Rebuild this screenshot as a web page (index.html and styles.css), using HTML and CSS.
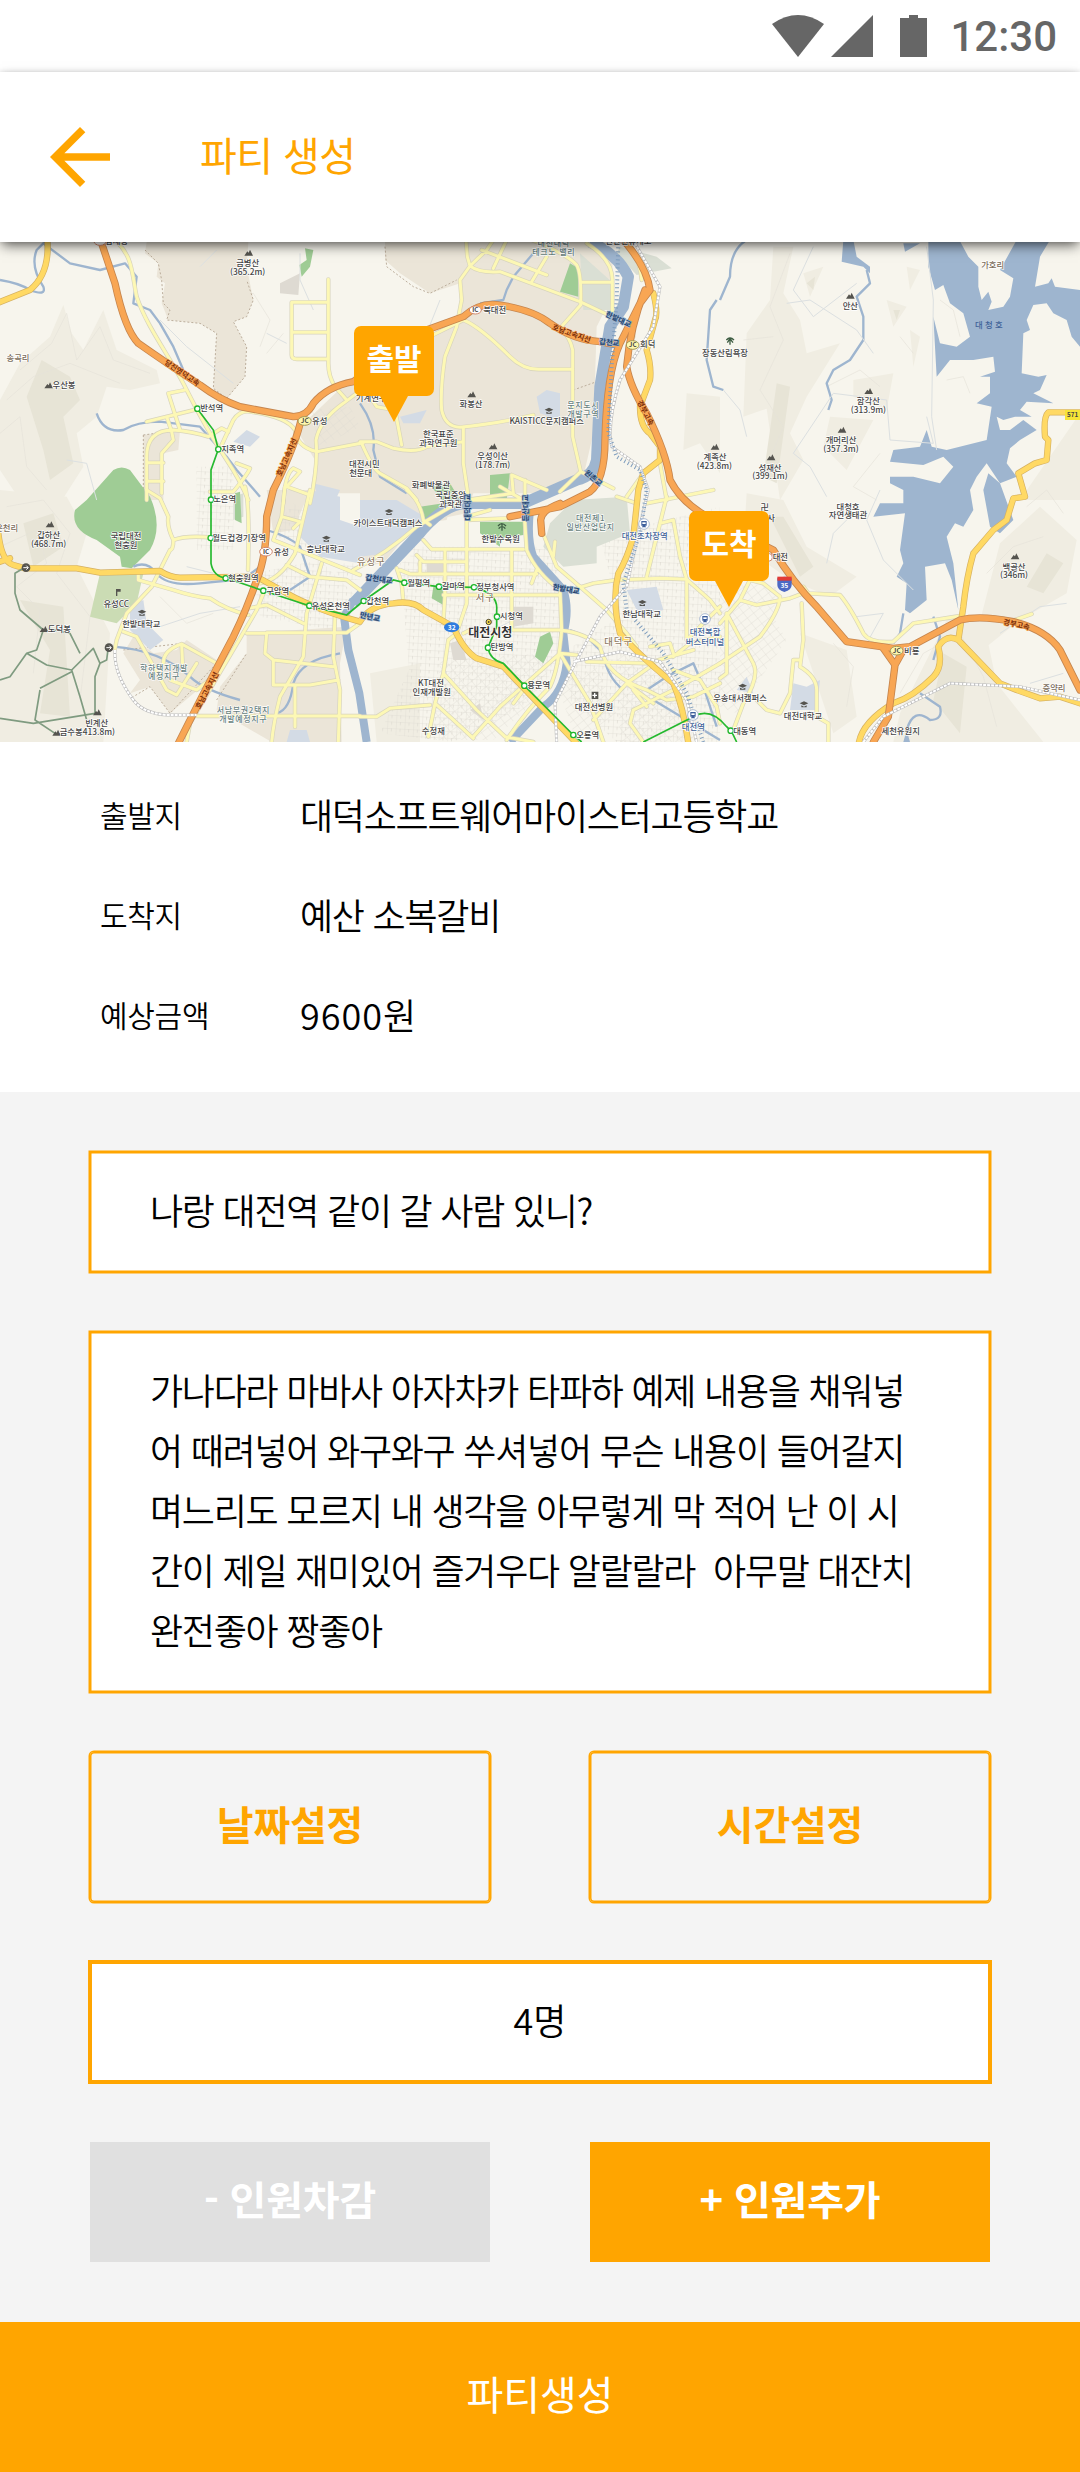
FILE: index.html
```html
<!DOCTYPE html>
<html lang="ko">
<head>
<meta charset="utf-8">
<title>파티 생성</title>
<link rel="stylesheet" href="styles.css">
</head>
<body>
<div class="screen">
  <div class="status">
    <svg class="status-icons" viewBox="772 15 155 42" width="155" height="42">
      <path d="M772 24Q798 6 824 24L798 57Z"/>
      <path d="M831 57L873 15V57Z"/>
      <path d="M909 15H918V18H927V57H900V18H909Z"/>
    </svg>
    <span class="clock">12:30</span>
  </div>
  <header class="appbar">
    <svg class="back" viewBox="0 0 24 24" width="90" height="90"><path d="M20 11H7.83l5.59-5.59L12 4l-8 8 8 8 1.41-1.41L7.83 13H20v-2z"/></svg>
    <h1 class="title">파티 생성</h1>
  </header>

  <section class="map">
    <svg class="map-art" viewBox="0 726 3240 1500" width="1080" height="500">
      <defs>
        <pattern id="streets" width="26" height="20" patternUnits="userSpaceOnUse" patternTransform="rotate(3)"><path d="M0 0H26M0 0V20M13 0V10"/></pattern>
        <pattern id="streets-tilt" width="24" height="20" patternUnits="userSpaceOnUse" patternTransform="rotate(-38)"><path d="M0 0H24M0 0V20"/></pattern>
        <g id="mount"><path d="M-13 9L-4-4L0 0L4-9L13 9Z"/></g>
        <g id="school"><path d="M-13-3L0-9L13-3L0 3ZM-8 3L0 7L8 3V9H-8Z"/></g>
        <g id="train"><circle r="16" fill="#fff" stroke="#8ba0c5" stroke-width="2"/><path d="M-8-9H8V5H-8ZM-7 10L-3 5H3L7 10" fill="#3e5f9c"/><path d="M-5-5H5V0H-5Z" fill="#fff"/></g>

        <g id="local">
          <g transform="translate(0 720)">
            <path d="M345 0C400 50 395 100 410 170C440 260 510 350 555 440C600 530 640 600 680 660Q720 720 745 780"/>
            <path d="M985 118V370Q985 410 1005 440L1040 480M985 187H875V345Q875 357 890 357H985M875 277H985"/>
            <path d="M555 450L505 460L540 570M440 545L590 508M500 530L515 575L520 600L485 640V760M440 780V650Q440 570 520 570Q580 575 625 590L665 565L685 575M440 668H490M440 724H490"/>
            <path d="M665 615L700 540Q720 510 750 515Q860 530 885 570Q890 620 950 635L1090 608M1090 445L1030 490Q960 540 948 600Q955 680 930 790"/>
            <path d="M850 790Q855 700 880 685L900 695L860 740L930 765M630 755H700Q745 700 750 685L710 670"/>
          </g>
          <g transform="translate(1080 720)">
            <path d="M318 0L322 50L330 78L300 120L305 180L290 260L255 350Q240 450 245 510Q255 560 300 562Q420 550 520 525M330 78L380 30L400 0M330 78Q360 100 420 95L660 185L745 225M365 30L560 105M440 0L400 85M560 50L515 125M490 -10Q620 40 650 75Q665 100 662 195L600 265Q630 290 638 330V590L662 695L600 755M680 10Q760 60 757 125V215M662 127H757"/>
            <path d="M215 287L310 240Q360 260 450 350Q490 390 540 388H638M0 605H50L100 625Q170 640 200 620L310 605M310 562V670L325 770M30 470L50 500L105 510L125 615M5 610Q40 690 60 700L140 745L170 780M455 705L460 760L320 780M455 705L560 750M495 720V780M662 695L760 745M800 770L850 700M900 670L920 780"/>
            <path d="M790 0Q840 50 845 120M820 290L815 240"/>
          </g>
          <g transform="translate(0 1470)">
            <path d="M440 0L480 25L505 80Q500 110 520 150Q520 180 510 180L490 220L455 290L380 370L350 450L345 475M520 150Q560 135 640 143M735 -10Q750 40 744 240M415 250V270L520 300Q580 320 630 325Q680 360 745 375M370 425L410 440L450 510L500 600L530 615L590 520"/>
            <path d="M490 520Q490 480 545 462L650 520M545 462L548 530M510 570L590 600L640 560M855 -10L845 80L820 150L1080 255M930 0L885 190Q840 270 780 280M845 80L900 95L880 115M860 225L930 260L1040 270L1080 300M965 220L920 370L910 500L840 620Q820 700 815 756M790 310L770 360L570 700L560 756M745 355L800 345L910 400M740 430H800L795 490L820 510V585H930L1015 570M800 428H1040L1080 400M820 510L1000 530M1005 380L1000 500L1020 600L1015 756M590 678H1080M885 590V710"/>
          </g>
          <g transform="translate(1080 1470)">
            <path d="M-20 240Q80 190 170 110L290 40M140 0Q180 30 190 90L210 105M190 150L215 178H490M170 195L190 215H320M120 240L150 252H530M110 235L125 280L130 335M255 180V310L250 400M180 215V250M320 90V340L290 430M390 60L320 80M320 90L440 85M250 315H600M455 180V420M320 30H490M420 -10L490 30L500 180Q530 250 600 300L605 420Q595 540 570 590Q500 660 440 750M530 240L515 280M460 420H600Q680 430 720 470Q740 560 860 600L920 630L1000 620L1080 580M290 430L265 450L250 550L225 640L205 740M250 550L350 660L435 740L520 756M310 430L330 420M225 640Q270 680 340 745M0 680H50L90 655L210 645M340 740L420 650L600 490L650 495M460 640L490 600M545 120L590 230Q660 290 740 360L800 430M585 155L580 200M650 295L700 280L770 270L900 265L980 268M860 260L920 20M980 268L960 200L940 90L900 100M980 268V450L1080 350M830 470L800 430M980 268L1050 330L1080 370M600 490L690 640L730 756M680 515L860 520L1000 480M700 690L800 580L870 530M800 580L880 640M820 660L960 590L1080 520M820 660L810 700L850 756M860 650L820 600M940 540L1020 570L1070 650L1080 700M870 470L930 460L940 490M940 500L990 460L1080 440M770 20L830 40M860 40L1060 0"/>
          </g>
          <g transform="translate(2160 1470)">
            <path d="M0 400L60 330L90 270M0 520L120 440Q180 360 180 320L130 280L90 270M60 330L110 345L210 325L250 310M250 290L265 310L360 315Q390 350 430 430Q450 460 520 455L580 400L720 378M850 385L870 395L935 372M245 340L250 450L240 530Q290 560 290 600V680L325 700V756M240 510L220 510L210 610L180 670L140 660L110 630M20 370L100 520Q120 560 70 640L40 720M0 565L20 550V370"/>
          </g>
        </g>

        <g id="main">
          <path transform="translate(0 720)" d="M142 0Q150 100 90 150L-10 190"/>
          <path transform="translate(0 1470)" d="M-5 130Q5 215 40 225L75 235H230L300 248L480 243Q510 262 540 263L770 260L860 310Q950 360 1080 395Q1110 345 1180 340Q1240 330 1270 360L1360 410Q1390 480 1430 505L1510 530L1730 760"/>
          <path d="M0 215L30 205" transform="translate(0 1470)"/>
          <path transform="translate(1080 720)" d="M880 160Q895 220 885 240L860 330Q875 380 870 420L840 500Q840 560 870 580L900 620V660L850 700L835 750L820 890Q800 960 775 1000Q755 1080 780 1180Q830 1240 940 1330Q970 1400 985 1510"/>
          <path transform="translate(2160 720)" d="M1080 517H985Q970 530 975 590L985 600L980 660L945 670L895 700L915 770L880 775L860 840L820 870L760 940Q740 1010 730 1100L715 1200M1080 1390L1020 1370L960 1375L890 1350L840 1330L715 1200Q680 1180 655 1220Q670 1280 640 1310Q580 1370 520 1390Q420 1450 415 1520"/>
        </g>

        <g id="highway">
          <path transform="translate(0 720)" d="M300 -5L345 130Q375 270 415 310Q500 370 600 435Q660 480 720 500L880 530Q920 530 940 490Q980 440 1060 425L1280 270L1390 230Q1440 185 1500 195Q1600 210 1650 250Q1720 300 1800 305L1850 315"/>
          <path transform="translate(0 720)" d="M905 530Q890 610 820 750L800 830Q800 950 770 1020Q740 1110 700 1190Q620 1340 535 1510"/>
          <path transform="translate(1080 720)" d="M790 0Q860 80 870 150L840 190L780 310Q740 400 735 600Q735 720 690 755L600 800L450 830M855 150Q810 260 800 380Q810 440 860 520Q920 640 930 720Q970 800 1080 850L1240 930Q1300 1030 1370 1100Q1430 1170 1460 1205L1600 1225L1650 1220L1800 1140Q1860 1125 1960 1145Q2060 1170 2100 1230L2160 1350M545 880L542 840Q545 810 600 790"/>
          <path transform="translate(2160 1470)" d="M490 475L525 525L550 480M525 525L505 680L460 756"/>
        </g>
      </defs>

      <rect y="726" width="3240" height="1500" fill="#f7f5ed"/>

      <!-- hills and contour shading -->
      <g class="hill">
        <path d="M190 915L215 1000L250 1050L310 930L350 1050L470 1110L480 1150L390 1170L320 1160L290 1250L230 1300L250 1400L180 1510L60 1500L0 1410V1200L60 1090L150 1010Z"/>
        <path d="M0 1470L200 1490L260 1600L230 1700L330 1900L310 2226H0Z"/>
        <path d="M2320 740L2380 740L2350 880L2400 960L2420 1060L2520 1030L2420 1190L2370 1300L2410 1380L2340 1500L2300 1226L2230 1250L2240 1000L2310 900ZM2410 820L2470 800L2430 890ZM2660 900L2720 920L2680 980ZM2720 800L2760 810L2730 870ZM2560 1140L2680 1120L2660 1230L2560 1190ZM2490 1250L2620 1260L2540 1410L2470 1340ZM2730 990L2760 1010L2740 1100Z"/>
        <path d="M2240 1480L2350 1500L2420 1640L2570 1730L2490 1790L2370 1740L2230 1640ZM2700 2140L2840 1860L2950 1860L2990 2050L3130 2226H2680ZM2910 1980L3000 1630L3120 1520L3230 1620L3200 1780L3060 1860ZM3060 1500L3240 1240V1500ZM2400 1900L2540 1950L2570 2150L2500 2200Z"/>
        <path d="M2060 1180L2160 1190V1420L2100 1330L2050 1350ZM1110 2020L1260 1990V2226H1130Z"/>
      </g>
      <g class="hill-high">
        <path d="M125 1080L210 1130L240 1200L190 1250L220 1390L150 1440L130 1350L80 1190ZM70 1570L160 1540L190 1640L100 1700ZM60 1800L190 1820L210 2150L120 2140L150 1950Z"/>
        <path d="M2330 1150L2370 1160L2330 1450L2290 1430ZM2310 1550L2350 1550L2440 1700L2400 1730ZM3140 1660L3190 1690L3130 1780L3080 1760ZM2800 2100L2830 1960L2900 2000L2880 2200ZM2420 850L2445 830L2440 870ZM2680 930L2700 930L2690 960Z"/>
      </g>
      <g class="contours">
        <path d="M60 1110L155 1030L200 940L230 1080L300 980L340 1080L450 1120M20 1200L100 1130L210 1090L310 1130L360 1150M0 1300L60 1250L80 1400L140 1470M20 1520L130 1500L210 1600L170 1720L270 1850L240 2100M0 1640L110 1590L140 1690L50 1760L120 1830L100 2020M2370 760L2310 920L2350 1020L2280 1170L2350 1280L2290 1420M2230 1020L2320 1010M2480 1160L2580 1110L2640 1160M2700 1010L2740 1060M2640 1360L2560 1460L2630 1500M2820 900L2860 930L2880 1010M2840 1140L2890 1130L2910 1180M3080 1520L3140 1470L3190 1540M2960 1720L3040 1640L3130 1610M2700 2080L2770 1960L2880 1900L2950 2030L2990 2180M2500 1930L2560 2000L2540 2120M480 1790L560 1870L640 1840M700 900L760 880L810 960L780 1040M800 1060L850 1000"/>
      </g>

      <!-- urban areas -->
      <g fill="#ebe5d8">
        <path d="M440 726H745L740 800L760 900L740 950L700 965L740 1040L735 1130L680 1195L640 1165L650 1000L600 970L505 960L485 910L495 850L470 830L475 790L435 760Z"/>
        <path d="M1155 726H1750L1840 760L1830 900L1790 980L1780 1300L1750 1430L1650 1480L1420 1480L1400 1540L1250 1570L1150 1690L1080 1700V1480L930 1480L945 1380L890 1290L1080 1110L1380 960V850L1290 880L1200 820L1155 780Z"/>
        <path d="M430 1305L540 1290L535 1350L490 1360V1500H430Z"/>
        <path d="M800 1470H930L880 1590L820 1600ZM740 1900L1040 1880L1020 1990L1025 2226H815L650 2130L660 2060L740 1960ZM1240 1480L1360 1480L1340 1560L1190 1580Z"/>
        <path d="M370 1960L400 1910L460 1960L530 1950L560 1920L650 1980L640 2030L510 2140L450 2060L390 2080L420 2040Z"/>
      </g>
      <g class="boundary"><path d="M435 750L475 790L485 840L490 910L510 930L500 960L600 970L650 1000L640 1165L680 1195L735 1130L740 1040L700 965L740 950L760 900L740 840M1155 740L1160 800L1240 860L1290 880L1370 840M430 1305L540 1290M430 1305V1500M1720 1170L1790 1145V1350M650 2100L740 1960M370 1950L550 1930L650 1990L510 2140L450 2060L400 2090"/></g>
      <g fill="url(#streets)">
        <path d="M1230 1640L1670 1640L1690 1980L1570 2120L1360 2226L1140 2200L1240 1980ZM590 1400H700V1650H590ZM760 1720L960 1680L1070 1790L1000 1890L780 1850ZM1200 1690L1320 1640V1880L1230 2040Z"/>
        <path d="M1800 1610L2160 1520V2226H1850L1710 2100L1700 1950L1860 1850ZM880 1510L930 1540L920 1650L810 1600ZM1010 1690H1080V1740H1010Z"/>
      </g>
      <g fill="url(#streets-tilt)">
        <path d="M1320 1980L1640 1960L1640 2070L1480 2220H1300ZM2160 1740L2330 1760L2320 1850L2360 1920L2210 2140L2160 2120ZM930 1230L1050 1220L1080 1280L960 1340ZM1850 1940L2000 2000L2100 2226H1860ZM1670 2050L1790 2000L1850 2140L1730 2226Z"/>
      </g>
      <g fill="#dadfd4">
        <path d="M1860 740L1970 770L2015 805L1910 825L1850 760ZM1740 760L1840 850L1830 930L1750 930ZM1650 1570L1720 1500L1880 1490L1890 1600L1790 1640L1790 1690L1690 1700L1630 1640ZM700 1490L730 1480V1550L700 1560Z"/>
      </g>
      <g fill="#d3dbe5">
        <path d="M1080 1500L1190 1500L1290 1560L1160 1660L1080 1670ZM930 1470L1020 1490V1560L1080 1580V1690L960 1670L900 1610ZM700 1325L740 1290L780 1310L750 1340ZM940 1450L1020 1470L980 1560ZM390 1820L430 1800L440 1870L490 1920L450 1950L390 1890ZM1610 1190L1640 1170L1680 1180V1260L1620 1240ZM1200 1250L1280 1230L1260 1270L1210 1270ZM1880 1770L1970 1760L1990 1830L1920 1850ZM2370 2130L2380 2050L2420 2060L2460 2040L2450 2130ZM2210 2070L2240 2030L2260 2080ZM860 2226L870 2190L920 2190L930 2226ZM1640 1180H1680V1250H1640Z"/>
      </g>
      <g fill="#9fcc95">
        <path d="M260 1500L340 1410Q365 1395 390 1410L450 1490Q490 1580 450 1650L395 1705L365 1700L360 1670L290 1620Q210 1590 225 1530Z"/>
        <path d="M915 745L940 750L930 800L905 830L898 795L920 780ZM1710 790L1735 805V890L1680 875ZM1470 1425L1530 1420L1520 1500H1470ZM1440 1565H1570V1605L1500 1615V1640L1440 1600ZM1620 1910L1650 1895L1660 1930L1630 1990L1605 1970ZM1300 1760H1330V1815L1295 1795ZM705 1480L720 1475L725 1570L705 1560ZM1295 1460L1350 1450L1380 1500L1340 1520ZM1260 1520L1330 1510L1320 1560L1270 1570Z"/>
        <path fill="#cbdcb4" d="M300 1720L430 1720L410 1810L350 1870L270 1850Z"/>
      </g>
      <g fill="#dedad2"><path d="M840 850L900 820L895 885L840 880ZM1280 1690H1330V1720H1280ZM1540 1820H1600V1870L1540 1880ZM1350 1930L1380 1920L1400 1980L1360 1980ZM1410 2130L1440 2110L1450 2160Z"/></g>

      <!-- lake and rivers -->
      <g fill="#9eb5cf">
        <path d="M2785 720H2878L2905 770L2935 800V860L2945 900L2965 875L2975 905L2965 930L3010 920L3030 890L3040 835L3000 810L3050 720H3150L3120 770L3105 860L3145 850L3155 835L3165 860L3240 870V1040L3215 1010L3200 960L3160 940L3140 910L3100 915L3080 960L3090 990L3070 1000L3065 1120L3115 1130L3140 1125L3120 1170L3100 1180L3160 1210L3080 1205L3060 1230L3095 1250L3045 1250L3010 1260L2990 1250L3000 1290L3030 1290L3070 1260L3110 1290L3060 1320L3030 1345L3020 1390L3050 1430L3000 1450L2960 1390L2930 1430L2910 1470L2920 1530L2890 1580L2865 1570L2840 1610L2860 1690L2875 1830L2855 1740L2835 1690L2775 1700L2780 1800L2730 1840L2715 1830L2720 1750L2690 1730L2710 1690L2700 1650L2715 1540L2620 1550L2640 1510L2710 1510V1470L2670 1450L2670 1430L2740 1430L2820 1450L2860 1400L2830 1370L2770 1395L2670 1385L2680 1350L2760 1340L2780 1290L2795 1340L2840 1350L2960 1320L2975 1220L2930 1210L2970 1180V1130L2940 1130L2985 1115L2980 1070L2920 1080L2850 1080L2810 1130L2800 950L2820 1030L2870 1040L2910 1010L2890 940L2850 910L2830 855L2805 870L2785 800Z"/>
        <path d="M2530 720H2560L2570 770L2610 800L2610 820L2590 800L2525 785ZM2710 730H2760L2715 755ZM2950 1470L2965 1420L3000 1450L3040 1560L3000 1600L2970 1580ZM2710 2226L2720 2190L2730 2226Z"/>
      </g>
      <g class="river">
        <path class="wide" d="M1770 726Q1850 760 1885 830L1870 920L1830 980L1800 1160L1790 1380Q1780 1430 1730 1440L1570 1510H1400Q1330 1510 1250 1610L1060 1810"/>
        <path class="mid" d="M1590 1530Q1580 1620 1600 1670L1690 1770Q1710 1830 1690 1900L1700 1990Q1690 2080 1630 2120L1530 2226"/>
        <path class="mid" d="M1060 1800L1032 1850L1045 1950L1078 2080L1100 2226"/>
        <path class="narrow" d="M1710 1890L1760 1910L1810 1960Q1820 2030 1870 2070M1020 1960Q900 1980 880 2050Q870 2130 830 2140M340 1940Q480 1950 570 2030Q610 2070 720 2100M1600 760L1540 830L1520 870L1510 900L1440 910M1080 1210Q1130 1280 1120 1350L1140 1430L1220 1480"/>
        <path class="narrow" d="M550 1110L520 1040L480 970L450 930L400 910L410 830L375 790L300 810L210 790L130 730M0 840Q60 850 90 870Q140 890 130 860Q90 800 110 750L140 720M290 1240Q310 1300 370 1290Q410 1265 480 1265L600 1280L680 1370L710 1410L780 1490M400 1700Q440 1680 470 1720Q500 1760 600 1750L700 1740L740 1730L780 1700M800 1590Q870 1610 900 1640L930 1730L870 1770M1960 2100L2160 2220M2240 720Q2190 750 2190 830L2160 900M2600 810L2610 850L2570 890L2590 950L2590 1020L2550 1080L2500 1110L2480 1150L2495 1200L2485 1230M2710 1840L2700 1900L2680 1930M2800 1850L2820 1910L2800 1980M2760 2080L2820 2120Q2830 2160 2790 2160Q2740 2120 2720 2190M2150 900L2130 930L2120 1080L2140 1160L2170 1170M1940 2070L2000 2030L2080 1990L2110 2060L2150 2180"/>
      </g>

      <!-- minor lanes -->
      <g class="lane">
        <path d="M2440 740L2380 870L2440 950L2570 850M2360 910L2430 900L2570 990L2620 1060M2780 740L2800 900L2795 1250L2810 1350M2780 1250L2800 1330L2670 1320L2660 1200L2500 1180M2500 1180L2380 1360L2430 1400L2480 1490M2640 1470L2600 1560L2650 1680L2740 1770M2560 1540L2500 1600L2480 1690M2600 1930L2650 1840L2570 1850M2170 1170L2220 1230L2240 1310M200 1380L260 1390L290 1500M860 1030L800 1000M650 750L600 800M940 930L900 840V760M700 1150L560 1040L480 960M3000 1900L3120 1820L3200 1810M3090 2050L3190 2020M1460 1900L1560 1850M640 1720L560 1700M480 1880L600 1840L720 1820M1320 900L1240 1100"/>
      </g>

      <use href="#local" class="local-casing"/><use href="#local" class="local-fill"/>
      <use href="#main" class="main-casing"/><use href="#main" class="main-fill"/>
      <use href="#highway" class="highway-casing"/><use href="#highway" class="highway-fill"/>

      <g class="trail"><path d="M70 1705L45 1720V1780L60 1830L130 1890L110 1950L80 1960L30 2030L0 2040M80 1960L140 1995L215 2010L280 1945L300 1990L285 2030V2140L100 2170L0 2155M215 2010L240 2090L260 2160M120 2070L105 2160L165 2200M120 2065L215 2015M145 1885L210 1900L240 1960M325 1940L320 1980L300 1990"/></g>
      <g id="rails">
        <path class="rail-casing" d="M1945 1470L1915 1600L1880 1760L1800 1850L1720 2000L1665 2110L1670 2226M1720 1985L1860 1955L1980 1985L2060 2100L2090 2226M1905 730L1980 860L1960 980L1860 1140Q1820 1270 1835 1340L1920 1400L1945 1470M345 1950Q340 2020 400 2100Q430 2140 500 2145H590M2590 2226L2650 2150L2850 2050L3060 2060L3240 2100"/>
        <path class="rail" d="M1945 1470L1915 1600L1880 1760L1800 1850L1720 2000L1665 2110L1670 2226M1720 1985L1860 1955L1980 1985L2060 2100L2090 2226M1905 730L1980 860L1960 980L1860 1140Q1820 1270 1835 1340L1920 1400L1945 1470M345 1950Q340 2020 400 2100Q430 2140 500 2145H590M2590 2226L2650 2150L2850 2050L3060 2060L3240 2100"/>
        <path class="rail-blue" d="M1855 730L1850 900L1835 1100L1825 1300L1850 1370L1920 1410L1940 1470L1920 1600L1870 1750L1880 1830L1990 1960L2060 2080L2110 2226"/>
      </g>
      <path class="metro" d="M592 1226L640 1290L655 1348L633 1410V1690Q640 1730 680 1735L790 1772L930 1818L1040 1845L1090 1803L1180 1740L1213 1748L1317 1760L1422 1762Q1495 1780 1490 1830V1880L1464 1943Q1470 1980 1510 1990L1573 2057L1720 2205L1745 2226M1930 2226L2080 2150Q2130 2120 2180 2180L2195 2195L2210 2226"/>
      <g class="station">
        <circle cx="592" cy="1226" r="8"/><circle cx="655" cy="1348" r="8"/><circle cx="633" cy="1499" r="8"/><circle cx="632" cy="1614" r="8"/><circle cx="677" cy="1735" r="8"/><circle cx="790" cy="1772" r="8"/><circle cx="928" cy="1817" r="8"/><circle cx="1091" cy="1803" r="8"/><circle cx="1213" cy="1748" r="8"/><circle cx="1317" cy="1760" r="8"/><circle cx="1422" cy="1762" r="8"/><circle cx="1491" cy="1850" r="8"/><circle cx="1464" cy="1943" r="8"/><circle cx="1573" cy="2057" r="8"/><circle cx="1720" cy="2205" r="8"/><circle cx="2192" cy="2192" r="8"/>
      </g>

      <!-- symbols -->
      <g fill="#55544f">
        <use href="#mount" x="746" y="758"/><use href="#mount" x="146" y="1156"/><use href="#mount" x="150" y="1573"/><use href="#mount" x="1415" y="1183"/><use href="#mount" x="1479" y="1339"/><use href="#mount" x="2145" y="1340"/><use href="#mount" x="2551" y="887"/><use href="#mount" x="2606" y="1173"/><use href="#mount" x="2526" y="1289"/><use href="#mount" x="2313" y="1372"/><use href="#mount" x="3045" y="1669"/><use href="#mount" x="132" y="1887"/><use href="#mount" x="292" y="2137"/><use href="#mount" x="170" y="2198"/>
        <use href="#school" x="979" y="1616"/><use href="#school" x="426" y="1838"/><use href="#school" x="1167" y="1536"/><use href="#school" x="1647" y="1232"/><use href="#school" x="1927" y="1809"/><use href="#school" x="2228" y="2060"/><use href="#school" x="2412" y="2113"/>
        <path d="M348 1767H362V1775H352V1788H348ZM1775 2075H1795V2097H1775Z"/>
        <path d="M1784 2079V2093M1777 2086H1791" stroke="#fff" stroke-width="4"/>
        <path d="M1494 1578Q1505 1564 1518 1578M1496 1586Q1506 1572 1516 1586M1506 1570V1592M2179 1020Q2190 1008 2202 1020M2182 1028L2190 1016L2199 1028M2190 1012V1034" fill="none" stroke="#3d5c42" stroke-width="4"/>
        <circle cx="78" cy="1703" r="13"/><circle cx="327" cy="1943" r="13"/>
        <path d="M70 1703H84M79 1697L85 1703L79 1709M319 1943H333M328 1937L334 1943L328 1949" fill="none" stroke="#fff" stroke-width="3"/>
      </g>
      <use href="#train" x="1932" y="1572"/><use href="#train" x="2115" y="1857"/><use href="#train" x="2079" y="2145"/>
      <circle cx="1466" cy="1866" r="8" fill="#ffe34b" stroke="#4c4530" stroke-width="3"/><circle cx="1466" cy="1866" r="3" fill="#4c4530"/>
      <ellipse cx="1355" cy="1882" rx="23" ry="15" fill="#2f7de0"/>
      <path d="M2332 1735Q2353 1726 2375 1735V1755Q2375 1770 2353 1776Q2332 1770 2332 1755Z" fill="#4d69c4"/><path d="M2332 1730H2375V1742H2332Z" fill="#e23b35"/>
      <path d="M3195 1230H3240V1260H3195Z" fill="#f7e437"/>
      <g class="junction">
        <ellipse cx="914" cy="1263" rx="20" ry="13"/><ellipse cx="1898" cy="1035" rx="19" ry="13"/><ellipse cx="2690" cy="1952" rx="19" ry="13"/>
        <g class="exit"><ellipse cx="1426" cy="930" rx="18" ry="12"/><ellipse cx="798" cy="1655" rx="19" ry="13"/><ellipse cx="300" cy="724" rx="18" ry="12"/><ellipse cx="2308" cy="1672" rx="9" ry="11"/></g>
      </g>

      <!-- place names -->
      <g class="label">
        <text x="743" y="798">금병산</text><text x="743" y="825">(365.2m)</text>
        <text x="192" y="1165">우산봉</text><text x="635" y="1234">반석역</text><text x="698" y="1356">지족역</text><text x="674" y="1507">노은역</text>
        <text x="959" y="1272">유성</text><text x="350" y="733">남세종</text>
        <text x="146" y="1614">갑하산</text><text x="146" y="1640">(468.7m)</text>
        <text x="378" y="1617">국립대전</text><text x="378" y="1644">현충원</text>
        <text x="717" y="1622">월드컵경기장역</text><text x="844" y="1664">유성</text><text x="977" y="1657">충남대학교</text>
        <text x="730" y="1743">현충원역</text><text x="833" y="1781">구암역</text><text x="992" y="1826">유성온천역</text>
        <text x="349" y="1821">유성CC</text><text x="424" y="1880">한밭대학교</text><text x="178" y="1896">도덕봉</text>
        <text x="290" y="2178">빈계산</text><text x="262" y="2205">금수봉413.8m)</text>
        <text x="1093" y="1400">대전시민</text><text x="1082" y="1427">천문대</text><text x="1125" y="1202">기계연구원</text>
        <text x="1484" y="938">북대전</text><text x="1413" y="1222">화봉산</text><text x="1640" y="1273">KAISTICC문지캠퍼스</text>
        <text x="1315" y="1312">한국표준</text><text x="1315" y="1339">과학연구원</text>
        <text x="1478" y="1377">우성이산</text><text x="1478" y="1404">(178.7m)</text><text x="1293" y="1464">화폐박물관</text>
        <text x="1352" y="1495">국립중앙</text><text x="1352" y="1522">과학관</text><text x="1943" y="1042">회덕</text><text x="1885" y="731">신탄진휴게소</text>
        <text x="1164" y="1577">카이스트대덕캠퍼스</text><text x="1502" y="1625">한밭수목원</text>
        <text x="1256" y="1757">월평역</text><text x="1360" y="1768">갈마역</text><text x="1486" y="1770">정부청사역</text><text x="1133" y="1812">갑천역</text>
        <text x="1534" y="1857">시청역</text><text x="1506" y="1951">탄방역</text><text x="1616" y="2065">용문역</text><text x="1763" y="2213">오룡역</text>
        <text x="1293" y="2058">KT대전</text><text x="1295" y="2085">인재개발원</text><text x="1300" y="2201">수정재</text>
        <text x="1782" y="2129">대전선병원</text><text x="1925" y="1851">한남대학교</text>
        <text x="2551" y="927">안산</text><text x="2175" y="1067">장동산림욕장</text>
        <text x="2605" y="1213">함각산</text><text x="2605" y="1240">(313.9m)</text><text x="2523" y="1329">개머리산</text><text x="2523" y="1355">(357.3m)</text>
        <text x="2310" y="1412">성재산</text><text x="2310" y="1437">(399.1m)</text><text x="2145" y="1380">계족산</text><text x="2143" y="1408">(423.8m)</text>
        <text x="2544" y="1529">대청호</text><text x="2544" y="1555">자연생태관</text><text x="2294" y="1530">卍</text><text x="2290" y="1562">비래사</text>
        <text x="2341" y="1680">대전</text><text x="3042" y="1709">백골산</text><text x="3042" y="1735">(346m)</text><text x="2735" y="1961">비룡</text>
        <text x="2220" y="2103">우송대서캠퍼스</text><text x="2409" y="2156">대전대학교</text><text x="2234" y="2201">대동역</text><text x="2702" y="2203">세천유원지</text>
        <g class="brown"><text x="54" y="1082">송곡리</text><text x="20" y="1592">온천리</text><text x="2978" y="804">가호리</text><text x="3162" y="2072">증약리</text></g>
        <g class="district"><text x="1114" y="1696">유성구</text><text x="1456" y="1804">서구</text><text x="1856" y="1936">대덕구</text></g>
        <g class="zone"><text x="1661" y="738">대전대덕</text><text x="1661" y="764">테크노 밸리</text><text x="1750" y="1224">문지도시</text><text x="1750" y="1250">개발구역</text><text x="1772" y="1562">대전제1</text><text x="1772" y="1589">일반산업단지</text><text x="492" y="2012">학하택지개발</text><text x="492" y="2038">예정지구</text><text x="730" y="2138">서남부권2택지</text><text x="730" y="2165">개발예정지구</text></g>
        <g class="blue"><text x="1934" y="1617">대전조차장역</text><text x="2115" y="1904">대전복합</text><text x="2115" y="1934">버스터미널</text><text x="2080" y="2191">대전역</text><text class="lake" x="2970" y="984">대청호</text></g>
        <g class="bridge"><text transform="translate(1852 965) rotate(25)">한밭대교</text><text transform="translate(1827 1035) rotate(5)">갑천교</text><text transform="translate(1775 1440) rotate(40)">원촌교</text><text transform="translate(1410 1522) rotate(-90)">대덕대교</text><text transform="translate(1583 1524) rotate(-90)">둔산대교</text><text transform="translate(1136 1745) rotate(7)">갑천대교</text><text transform="translate(1697 1775) rotate(10)">한밭대교</text><text transform="translate(1108 1858) rotate(12)">만년교</text></g>
        <g class="road-name"><text transform="translate(542 1125) rotate(34)">당진영덕고속</text><text transform="translate(868 1375) rotate(-66)">호남고속지선</text><text transform="translate(628 2075) rotate(-62)">호남고속지선</text><text transform="translate(1712 1008) rotate(20)">호남고속지선</text><text transform="translate(1930 1242) rotate(62)">경부고속</text><text transform="translate(3048 1881) rotate(12)">경부고속</text></g>
        <g class="mark"><text x="914" y="1270">JC</text><text x="1898" y="1042">JC</text><text x="2690" y="1959">JC</text><text x="1426" y="937">IC</text><text x="798" y="1662">IC</text><text x="3218" y="1251">571</text></g>
        <g class="shield"><text x="1355" y="1889">32</text><text x="2353" y="1763">35</text></g>
        <text class="city" x="1471" y="1912">대전시청</text>
      </g>
    </svg>
    <div class="pin pin-start">출발</div>
    <div class="pin pin-end">도착</div>
  </section>

  <dl class="trip">
    <dt>출발지</dt><dd>대덕소프트웨어마이스터고등학교</dd>
    <dt>도착지</dt><dd>예산 소복갈비</dd>
    <dt>예상금액</dt><dd><span class="amount">9600</span>원</dd>
  </dl>

  <main class="form">
    <div class="field field-title">나랑 대전역 같이 갈 사람 있니?</div>
    <div class="field field-body">가나다라 마바사 아자차카 타파하 예제 내용을 채워넣
어 때려넣어 와구와구 쑤셔넣어 무슨 내용이 들어갈지
며느리도 모르지 내 생각을 아무렇게 막 적어 난 이 시
간이 제일 재미있어 즐거우다 알랄랄라  아무말 대잔치
완전좋아 짱좋아</div>
    <div class="pair">
      <div class="button outlined">날짜설정</div>
      <div class="button outlined">시간설정</div>
    </div>
    <div class="field field-count">4명</div>
    <div class="pair">
      <div class="button disabled">- 인원차감</div>
      <div class="button filled">+ 인원추가</div>
    </div>
  </main>
  <footer class="submit">파티생성</footer>
</div>
</body>
</html>
```
FILE: styles.css
```css
* { box-sizing: border-box; margin: 0; }
body { background: #fff; }

.screen {
  width: 1080px;
  height: 2472px;
  display: flex;
  flex-direction: column;
  overflow: hidden;
  font-family: "Noto Sans CJK KR", sans-serif;
  color: #000;
}

.status {
  height: 72px;
  display: flex;
  justify-content: flex-end;
  align-items: flex-start;
  gap: 23px;
  padding: 15px 23px 0 0;
}
.status-icons { fill: #666; }
.clock {
  padding-top: 1px;
  font: 500 42px/42px Roboto, sans-serif;
  color: #666;
}

.appbar {
  position: relative;
  z-index: 2;
  height: 170px;
  display: flex;
  align-items: center;
  gap: 75px;
  padding-left: 35px;
  background: #fff;
  box-shadow: 0 5px 12px -2px rgba(0, 0, 0, .65), 0 0 5px rgba(0, 0, 0, .1);
}
.back { fill: #ffa500; }
.title {
  padding-bottom: 7px;
  font-size: 40px;
  font-weight: 400;
  line-height: 60px;
  letter-spacing: -.6px;
  color: #ffa500;
}

.map { position: relative; height: 500px; overflow: hidden; }
.map-art { display: block; }
.pin {
  position: absolute;
  width: 80px;
  height: 70px;
  border-radius: 7px;
  background: #ffa500;
  color: #fff;
  font-size: 30px;
  font-weight: 700;
  line-height: 63px;
  text-align: center;
}
.pin::after {
  content: "";
  position: absolute;
  left: 26px;
  top: 70px;
  border: 14px solid transparent;
  border-top: 26px solid #ffa500;
  border-bottom: 0;
}
.pin-start { left: 354px; top: 84px; }
.pin-end { left: 689px; top: 269px; }

.hill { fill: #f0ede2; }
.hill-high { fill: #e7e4d6; }
.contours { fill: none; stroke: #e5e3d9; stroke-width: 2; stroke-linejoin: round; }
.boundary { fill: none; stroke: #bcae9c; stroke-width: 3; stroke-dasharray: 6 6; }
pattern path { fill: none; stroke: #dedbd3; stroke-width: 2; }
.river { fill: none; stroke: #9eb5cf; stroke-linejoin: round; }
.wide { stroke-width: 34; }
.mid { stroke-width: 24; }
.narrow { stroke-width: 7; }
.lane { fill: none; stroke: #dce0e1; stroke-width: 3; stroke-linejoin: round; }
.local-casing, .local-fill, .main-casing, .main-fill, .highway-casing, .highway-fill {
  fill: none;
  stroke-linejoin: round;
  stroke-linecap: round;
}
.local-casing { stroke: #d8d4bd; stroke-width: 13; }
.local-fill { stroke: #fdf8b5; stroke-width: 9; }
.main-casing { stroke: #d5b163; stroke-width: 19; }
.main-fill { stroke: #ffd964; stroke-width: 15; }
.highway-casing { stroke: #c5854e; stroke-width: 22; }
.highway-fill { stroke: #f8a654; stroke-width: 17; }
.trail { fill: none; stroke: #7f9b80; stroke-width: 5; stroke-linejoin: round; }
.rail-casing { fill: none; stroke: #bdbdbd; stroke-width: 9; }
.rail { fill: none; stroke: #fff; stroke-width: 6; stroke-dasharray: 9 3; }
.rail-blue { fill: none; stroke: #7d9cbd; stroke-width: 12; stroke-dasharray: 3 9; }
.metro { fill: none; stroke: #25b92f; stroke-width: 5; }
.station { fill: #fff; stroke: #20b52a; stroke-width: 4; }
.junction { fill: #fff7ae; stroke: #a29a59; stroke-width: 3; }
.exit { fill: #fff; stroke: #d08669; }

.label {
  font-size: 25px;
  font-weight: 500;
  text-anchor: middle;
  fill: #444;
  stroke: #fff;
  stroke-width: 4;
  stroke-linejoin: round;
  paint-order: stroke;
}
.label .brown { fill: #7b6d5b; }
.label .district { fill: #8f7b65; font-size: 28px; letter-spacing: 3px; }
.label .zone { fill: #687f80; font-size: 24px; letter-spacing: 2px; }
.label .blue { fill: #3f6298; }
.label .lake { stroke: none; letter-spacing: 7px; }
.label .bridge { fill: #24446e; font-size: 22px; font-weight: 700; stroke: #9eb5cf; }
.label .road-name { fill: #7b2d09; font-size: 22px; font-weight: 700; stroke: #f8a654; }
.label .mark { font-size: 19px; font-weight: 700; stroke: none; }
.label .shield { font-size: 20px; font-weight: 700; fill: #fff; stroke: none; }
.label .city { font-size: 36px; font-weight: 700; fill: #333; }

.trip {
  height: 350px;
  display: grid;
  grid-template-columns: 200px 1fr;
  grid-auto-rows: 100px;
  align-items: center;
  padding: 22px 0 0 100px;
  font-weight: 350;
}
.trip dt { font-size: 30px; letter-spacing: -.3px; }
.trip dd { font-size: 36px; letter-spacing: -1.25px; }
.amount { letter-spacing: 1px; }

.form {
  height: 1230px;
  display: flex;
  flex-direction: column;
  gap: 60px;
  padding: 60px 90px;
  background: #f4f4f4;
}
.field {
  background: #fff;
  box-shadow: 0 0 0 1.5px #ffa500, inset 0 0 0 1.5px #ffa500;
  font-size: 36px;
  font-weight: 350;
  line-height: 60px;
  letter-spacing: -1.25px;
}
.field-title { height: 120px; padding: 27px 60px; }
.field-body { height: 360px; padding: 27px 60px; white-space: pre; }
.field-count {
  height: 120px;
  padding: 27px 0;
  text-align: center;
  letter-spacing: 0;
  box-shadow: 0 0 0 2px #ffa500, inset 0 0 0 2px #ffa500;
}
.pair { display: flex; gap: 100px; }
.button {
  flex: 1;
  height: 120px;
  line-height: 112px;
  text-align: center;
  font-size: 40px;
  font-weight: 700;
  letter-spacing: -.2px;
  color: #fff;
}
.outlined {
  height: 150px;
  line-height: 142px;
  border-radius: 4px;
  color: #ffa500;
  box-shadow: 0 0 0 1.5px #ffa500, inset 0 0 0 1.5px #ffa500;
}
.disabled { background: #e0e0e0; }
.filled { background: #ffa500; }
.submit {
  height: 150px;
  line-height: 143px;
  text-align: center;
  background: #ffa500;
  color: #fff;
  font-size: 40px;
}
```
